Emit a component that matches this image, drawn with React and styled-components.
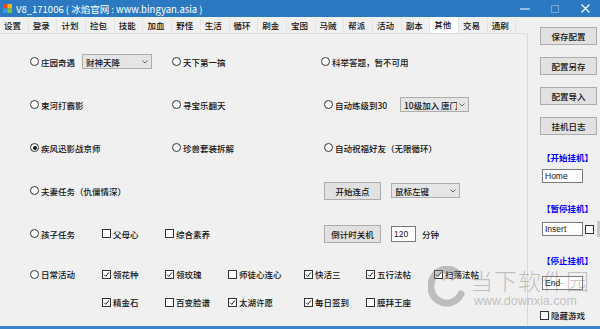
import React from "react";
import styled, { createGlobalStyle } from "styled-components";

const Global = createGlobalStyle`
  html, body { margin: 0; padding: 0; background: #f0f0f0; }
  body { font-family: "Noto Sans CJK SC", sans-serif; }
`;

const Window = styled.div`
  position: relative;
  width: 600px;
  height: 329px;
  overflow: hidden;
  background: #f0f0f0;
  display: flex;
  flex-direction: column;
  font-family: "Noto Sans CJK SC", sans-serif;
  font-size: 8.5px;
  font-weight: 500;
  color: #111;
`;

const TitleBar = styled.div`
  height: 17px;
  flex: none;
  background: #2b79c0;
  display: flex;
  align-items: center;
  color: #fff;
  padding-left: 2px;
  font-weight: 400;
`;

const TitleText = styled.span`
  font-size: 9.5px;
  margin-left: 3px;
  white-space: nowrap;
`;

const Controls = styled.div`
  margin-left: auto;
  display: flex;
  height: 100%;
`;

const Ctrl = styled.div`
  width: 30px;
  height: 100%;
  display: flex;
  align-items: center;
  justify-content: center;
  opacity: ${(p) => (p.$dim ? 0.35 : 1)};
`;

const Body = styled.div`
  flex: 1;
  display: flex;
  min-height: 0;
`;

const TabControl = styled.div`
  width: 528px;
  flex: none;
  display: flex;
  flex-direction: column;
`;

const TabStrip = styled.div`
  height: 16px;
  flex: none;
  display: flex;
  align-items: flex-end;
  border-bottom: 1px solid #dcdcdc;
`;

const Tab = styled.div`
  width: 28.7px;
  flex: none;
  box-sizing: border-box;
  height: ${(p) => (p.$active ? 16 : 15)}px;
  line-height: 15px;
  padding-left: 4px;
  background: ${(p) => (p.$active ? "#ffffff" : "#f0f0f0")};
  border-right: 1px solid #e4e4e4;
  white-space: nowrap;
  overflow: hidden;
`;

const TabPage = styled.div`
  flex: 1;
  border-right: 1px solid #d9d9d9;
  padding: 6px 0 0 30px;
  display: flex;
  flex-direction: column;
`;

const Row = styled.div`
  display: grid;
  grid-template-columns: ${(p) => p.$cols};
  height: ${(p) => p.$h}px;
  align-items: center;
`;

const Cell = styled.div`
  display: flex;
  align-items: center;
  white-space: nowrap;
`;

const Option = styled.label`
  display: inline-flex;
  align-items: center;
  gap: 2px;
  white-space: nowrap;
`;

const RadioDot = styled.span`
  width: 9px;
  height: 9px;
  box-sizing: border-box;
  border: 1px solid #333;
  border-radius: 50%;
  background: #fff;
  flex: none;
  display: flex;
  align-items: center;
  justify-content: center;
  &::after {
    content: "";
    width: 4px;
    height: 4px;
    border-radius: 50%;
    background: ${(p) => (p.$on ? "#1b1b1b" : "transparent")};
  }
`;

const CheckBox = styled.span`
  width: 9px;
  height: 9px;
  box-sizing: border-box;
  border: 1px solid #333;
  background: #fff;
  flex: none;
  display: flex;
  align-items: center;
  justify-content: center;
`;

const SelectBox = styled.div`
  width: ${(p) => p.$w}px;
  height: 15px;
  box-sizing: border-box;
  border: 1px solid #adadad;
  background: #e5e5e5;
  display: flex;
  align-items: center;
  padding: 0 3px 0 3px;
  overflow: hidden;
  gap: 2px;
`;

const SelectText = styled.span`
  flex: 1;
  overflow: hidden;
  white-space: nowrap;
`;

const Button = styled.div`
  width: 57px;
  height: 18px;
  box-sizing: border-box;
  border: 1px solid #adadad;
  background: #e1e1e1;
  display: flex;
  align-items: center;
  justify-content: center;
  white-space: nowrap;
`;

const TextInput = styled.div`
  width: ${(p) => p.$w}px;
  height: ${(p) => p.$h || 15}px;
  box-sizing: border-box;
  border: 1px solid #7a7a7a;
  background: #fff;
  font-family: "Liberation Sans", Arial, sans-serif;
  font-weight: 400;
  font-size: 8.5px;
  display: flex;
  align-items: center;
  padding-left: 2px;
  margin-left: ${(p) => p.$ml || 0}px;
  flex: none;
`;

const Unit = styled.span`
  margin-left: 6px;
`;

const SidePanel = styled.div`
  flex: 1;
  display: flex;
  flex-direction: column;
  padding: 10px 0 0 12px;
`;

const SideButtons = styled.div`
  display: flex;
  flex-direction: column;
  gap: 12px;
`;

const BlueLabel = styled.div`
  color: #0000ff;
  font-weight: bold;
  height: 10px;
  line-height: 10px;
  margin-left: 2px;
  margin-top: ${(p) => p.$mt}px;
  white-space: nowrap;
`;

const HotkeyRow = styled.div`
  display: flex;
  align-items: center;
  gap: 2px;
  margin-top: ${(p) => p.$mt}px;
`;

const Sliver = styled.div`
  width: 5px;
  height: 16px;
  background: #c8c8c8;
  margin-left: 1px;
`;

const BottomEdge = styled.div`
  height: 3px;
  flex: none;
  background: #3a86c8;
`;

const Watermark = styled.div`
  position: absolute;
  left: 428px;
  top: 266px;
  display: flex;
  align-items: center;
  gap: 4px;
  pointer-events: none;
  color: rgba(120, 120, 120, 0.42);
`;

const WmText = styled.div`
  display: flex;
  flex-direction: column;
  align-items: flex-start;
`;

const WmBig = styled.div`
  font-family: "Noto Sans CJK SC", sans-serif;
  font-weight: 300;
  font-size: 23px;
  line-height: 27px;
  letter-spacing: 1px;
`;

const WmSmall = styled.div`
  font-family: "Liberation Sans", Arial, sans-serif;
  font-weight: 400;
  font-size: 12.5px;
  line-height: 14px;
  margin-left: 4px;
`;

const Chevron = () => (
  <svg width="6" height="4" viewBox="0 0 6 4">
    <polyline points="0.5,0.5 3,3 5.5,0.5" fill="none" stroke="#555" strokeWidth="0.9" />
  </svg>
);

const Tick = () => (
  <svg width="7" height="7" viewBox="0 0 7 7">
    <polyline points="1,3.6 2.8,5.4 6,1.4" fill="none" stroke="#222" strokeWidth="1" />
  </svg>
);

const Radio = ({ on, children }) => (
  <Option>
    <RadioDot $on={on} />
    {children}
  </Option>
);

const Check = ({ on, children }) => (
  <Option>
    <CheckBox>{on ? <Tick /> : null}</CheckBox>
    {children}
  </Option>
);

const Select = ({ w, children }) => (
  <SelectBox $w={w}>
    <SelectText>{children}</SelectText>
    <Chevron />
  </SelectBox>
);

const tabs = ["设置", "登录", "计划", "捡包", "技能", "加血", "野怪", "生活", "循环", "刷金", "宝图", "马贼", "帮派", "活动", "副本", "其他", "交易", "通刷"];

const AppIcon = () => (
  <svg width="11" height="11" viewBox="0 0 11 11">
    <path d="M1 1 L5.5 1 L5.5 5.5 L1 5.5 Z" fill="#e8452c" />
    <path d="M5.5 1 L10 1 L10 5.5 L5.5 5.5 Z" fill="#f5b91a" />
    <path d="M1 5.5 L5.5 5.5 L5.5 10 L1 10 Z" fill="#2aa0e6" />
    <path d="M5.5 5.5 L10 5.5 L10 10 L5.5 10 Z" fill="#7ac143" />
  </svg>
);

export default function App() {
  const dailyCols = "72px 63px 63px 76px 62px 68px auto";
  return (
    <>
      <Global />
      <Window>
        <TitleBar>
          <AppIcon />
          <TitleText>V8_171006 ( 冰焰官网 : www.bingyan.asia )</TitleText>
          <Controls>
            <Ctrl>
              <svg width="10" height="2" viewBox="0 0 10 2"><rect x="0" y="0.5" width="10" height="1" fill="#fff" /></svg>
            </Ctrl>
            <Ctrl $dim>
              <svg width="8" height="8" viewBox="0 0 8 8"><rect x="0.5" y="0.5" width="7" height="7" fill="none" stroke="#fff" /></svg>
            </Ctrl>
            <Ctrl>
              <svg width="9" height="9" viewBox="0 0 9 9"><path d="M0.5 0.5 L8.5 8.5 M8.5 0.5 L0.5 8.5" stroke="#fff" strokeWidth="1.1" /></svg>
            </Ctrl>
          </Controls>
        </TitleBar>
        <Body>
          <TabControl>
            <TabStrip>
              {tabs.map((t) => (
                <Tab key={t} $active={t === "其他"}>{t}</Tab>
              ))}
            </TabStrip>
            <TabPage>
              <Row $cols="52px 90px 149px auto" $h={43}>
                <Cell><Radio>庄园奇遇</Radio></Cell>
                <Cell><Select w={70}>财神天降</Select></Cell>
                <Cell><Radio>天下第一搞</Radio></Cell>
                <Cell><Radio>科举答题，暂不可用</Radio></Cell>
              </Row>
              <Row $cols="142px 152px 76px auto" $h={43}>
                <Cell><Radio>束河打霸影</Radio></Cell>
                <Cell><Radio>寻宝乐翻天</Radio></Cell>
                <Cell><Radio>自动练级到30</Radio></Cell>
                <Cell><Select w={69}>10级加入 唐门</Select></Cell>
              </Row>
              <Row $cols="142px 152px auto" $h={43}>
                <Cell><Radio on>疾风迅影战京师</Radio></Cell>
                <Cell><Radio>珍兽套装拆解</Radio></Cell>
                <Cell><Radio>自动祝福好友（无限循环）</Radio></Cell>
              </Row>
              <Row $cols="294px 67px auto" $h={43}>
                <Cell><Radio>夫妻任务（仇僵情深）</Radio></Cell>
                <Cell><Button>开始连点</Button></Cell>
                <Cell><Select w={69}>鼠标左键</Select></Cell>
              </Row>
              <Row $cols="72px 63px 159px 67px auto" $h={43}>
                <Cell><Radio>孩子任务</Radio></Cell>
                <Cell><Check>父母心</Check></Cell>
                <Cell><Check>综合素养</Check></Cell>
                <Cell><Button>倒计时关机</Button></Cell>
                <Cell>
                  <TextInput $w={25} $h={16}>120</TextInput>
                  <Unit>分钟</Unit>
                </Cell>
              </Row>
              <Row $cols={dailyCols} $h={38}>
                <Cell><Radio>日常活动</Radio></Cell>
                <Cell><Check on>领花种</Check></Cell>
                <Cell><Check on>领玫瑰</Check></Cell>
                <Cell><Check>师徒心连心</Check></Cell>
                <Cell><Check on>快活三</Check></Cell>
                <Cell><Check on>五行法帖</Check></Cell>
                <Cell><Check on>扫荡法帖</Check></Cell>
              </Row>
              <Row $cols={dailyCols} $h={18}>
                <Cell />
                <Cell><Check on>精金石</Check></Cell>
                <Cell><Check>百变脸谱</Check></Cell>
                <Cell><Check on>太湖许愿</Check></Cell>
                <Cell><Check on>每日签到</Check></Cell>
                <Cell><Check>膜拜王座</Check></Cell>
              </Row>
            </TabPage>
          </TabControl>
          <SidePanel>
            <SideButtons>
              <Button>保存配置</Button>
              <Button>配置另存</Button>
              <Button>配置导入</Button>
              <Button>挂机日志</Button>
            </SideButtons>
            <BlueLabel $mt={17}>【开始挂机】</BlueLabel>
            <HotkeyRow $mt={7}>
              <TextInput $w={41} $h={14} $ml={2}>Home</TextInput>
            </HotkeyRow>
            <BlueLabel $mt={20}>【暂停挂机】</BlueLabel>
            <HotkeyRow $mt={8}>
              <TextInput $w={41} $h={14} $ml={2}>Insert</TextInput>
              <CheckBox />
              <Sliver />
            </HotkeyRow>
            <BlueLabel $mt={18}>【停止挂机】</BlueLabel>
            <HotkeyRow $mt={11}>
              <TextInput $w={41} $h={14} $ml={2}>End</TextInput>
            </HotkeyRow>
            <HotkeyRow $mt={19}>
              <Check>隐藏游戏</Check>
            </HotkeyRow>
          </SidePanel>
        </Body>
        <BottomEdge />
        <Watermark>
          <svg width="38" height="42" viewBox="0 0 38 42">
            <path d="M30 8 A16 17 0 1 0 33 28" fill="none" stroke="rgba(120,120,120,0.42)" strokeWidth="7" strokeLinecap="round" />
            <path d="M14 14 A8 8 0 0 1 26 14" fill="none" stroke="rgba(120,120,120,0.35)" strokeWidth="3" />
          </svg>
          <WmText>
            <WmBig>当下软件园</WmBig>
            <WmSmall>www.downxia.com</WmSmall>
          </WmText>
        </Watermark>
      </Window>
    </>
  );
}
